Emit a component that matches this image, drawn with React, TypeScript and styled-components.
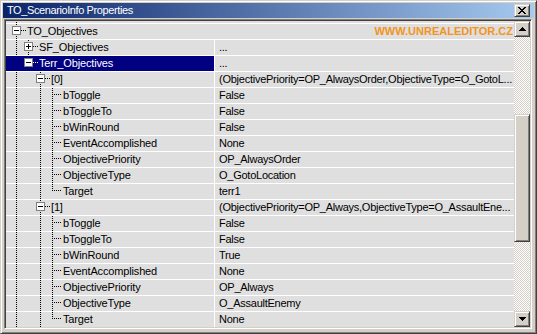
import React from 'react';
import styled, { createGlobalStyle } from 'styled-components';

const GlobalStyle = createGlobalStyle`
  html, body { margin: 0; padding: 0; background: #D4D0C8; }
  body { font-family: "Liberation Sans", Arial, sans-serif; }
`;

const FACE = '#D4D0C8';

const Window = styled.div`
  box-sizing: border-box;
  width: 537px;
  height: 334px;
  background: ${FACE};
  border: 1px solid;
  border-color: ${FACE} #404040 #404040 ${FACE};
  box-shadow: inset 1px 1px #ffffff, inset -1px -1px #808080;
  padding: 2px;
  display: flex;
  flex-direction: column;
`;

const TitleBar = styled.div`
  height: 15px;
  flex: none;
  margin-bottom: 1px;
  display: flex;
  align-items: center;
  justify-content: space-between;
  padding: 0 4px 0 4px;
  background: linear-gradient(to right, #0a246a, #a6caf0);
  color: #ffffff;
  font-size: 11px;
  letter-spacing: -0.4px;
  white-space: nowrap;
`;

const TitleText = styled.span`
  line-height: 15px;
`;

const raised = `
  box-sizing: border-box;
  background: ${FACE};
  border: 1px solid;
  border-color: ${FACE} #404040 #404040 ${FACE};
  box-shadow: inset 1px 1px #ffffff, inset -1px -1px #808080;
`;

const CloseButton = styled.div`
  ${raised}
  width: 16px;
  height: 13px;
  display: flex;
  align-items: center;
  justify-content: center;
`;

const Panel = styled.div`
  box-sizing: border-box;
  margin-left: 1px;
  width: 528px;
  height: 310px;
  flex: none;
  border: 1px solid;
  border-color: #808080 #ffffff #ffffff #808080;
  box-shadow: inset 1px 1px #404040, inset -1px -1px ${FACE};
  padding: 1px;
  display: flex;
`;

const Viewport = styled.div`
  flex: 1;
  overflow: hidden;
  background: #dfdfdf;
`;

const List = styled.div`
  margin-top: -13px;
`;

const Row = styled.div`
  box-sizing: border-box;
  height: 16px;
  display: flex;
  border-bottom: 1px solid #ffffff;
  font-size: 11px;
  line-height: 15px;
  color: #000000;
`;

const NameCell = styled.div<{ $selected?: boolean }>`
  width: 208px;
  flex: none;
  display: flex;
  align-items: flex-start;
  overflow: hidden;
  white-space: nowrap;
  letter-spacing: -0.15px;
  background: ${(p) => (p.$selected ? '#000080' : 'transparent')};
  color: ${(p) => (p.$selected ? '#ffffff' : '#000000')};
`;

const Label = styled.span`
  line-height: 15px;
`;

const ValueCell = styled.div`
  flex: 1;
  min-width: 0;
  border-left: 1px solid #ffffff;
  padding-left: 4px;
  overflow: hidden;
  white-space: nowrap;
  letter-spacing: -0.25px;
`;

const Watermark = styled.span`
  margin-left: auto;
  padding-right: 1px;
  font-weight: bold;
  font-size: 11px;
  color: #f39420;
  white-space: nowrap;
`;

const ScrollBar = styled.div`
  width: 16px;
  flex: none;
  display: flex;
  flex-direction: column;
`;

const ScrollButton = styled.div`
  ${raised}
  height: 16px;
  flex: none;
  display: flex;
  align-items: center;
  justify-content: center;
`;

const Track = styled.div`
  flex: 1;
  display: flex;
  flex-direction: column;
  background-color: #ffffff;
  background-image: repeating-conic-gradient(${FACE} 0% 25%, #ffffff 0% 50%);
  background-size: 2px 2px;
`;

const Thumb = styled.div<{ $top: number; $size: number }>`
  ${raised}
  margin-top: ${(p) => p.$top}px;
  height: ${(p) => p.$size}px;
  flex: none;
`;

type RowData = {
  level: number;
  label: string;
  value?: string;
  expander?: 'plus' | 'minus';
  last?: boolean;
  through: number[];
  selected?: boolean;
  category?: boolean;
};

const cxOf = (l: number) => 10 + 12 * l;
const CY = 6;
const H = 15;

function Guides({ row }: { row: RowData }) {
  const cx = cxOf(row.level);
  const w = cx + 11;
  const parts: React.ReactElement[] = [];
  const dot = (x: number, y: number, c = '#000000') =>
    parts.push(<rect key={parts.length} x={x} y={y} width={1} height={1} fill={c} />);
  if (!row.selected) {
    for (const l of row.through) for (let y = 0; y < H; y += 2) dot(cxOf(l), y);
    // own level: line from top
    const topEnd = row.expander ? CY - 4 : CY;
    for (let y = 0; y < topEnd; y += 2) dot(cx, y);
    if (!row.last) {
      const start = row.expander ? CY + 6 : CY + 2;
      for (let y = start; y < H; y += 2) dot(cx, y);
    }
    if (!row.expander) dot(cx, CY);
    if (row.expander === 'minus') {
      for (let y = 12; y < H; y += 2) dot(cxOf(row.level + 1), y);
    }
  }
  const ink = row.selected ? '#ffffff' : '#000000';
  if (row.expander) {
    for (let x = cx + 5; x <= cx + 9; x += 2) dot(x, CY, ink);
    parts.push(
      <rect key="b1" x={cx - 4} y={CY - 4} width={9} height={9} fill="#808080" />,
      <rect key="b2" x={cx - 3} y={CY - 3} width={7} height={7} fill="#ffffff" />,
      <rect key="b3" x={cx - 2} y={CY} width={5} height={1} fill="#000000" />
    );
    if (row.expander === 'plus')
      parts.push(<rect key="b4" x={cx} y={CY - 2} width={1} height={5} fill="#000000" />);
  } else {
    for (let x = cx + 2; x <= cx + 8; x += 2) dot(x, CY, ink);
  }
  return (
    <svg width={w} height={H} viewBox={`0 0 ${w} ${H}`} shapeRendering="crispEdges" style={{ flex: 'none', display: 'block' }}>
      {parts}
    </svg>
  );
}

const props = (
  vals: [string, string][]
): RowData[] =>
  vals.map(([label, value], i) => ({
    level: 3,
    label,
    value,
    through: [0, 2],
    last: i === vals.length - 1,
  }));

const rows: RowData[] = [
  { level: 0, label: 'TO_Objectives', expander: 'minus', through: [], category: true },
  { level: 1, label: 'SF_Objectives', value: '...', expander: 'plus', through: [0] },
  { level: 1, label: 'Terr_Objectives', value: '...', expander: 'minus', last: true, through: [0], selected: true },
  {
    level: 2,
    label: '[0]',
    value: '(ObjectivePriority=OP_AlwaysOrder,ObjectiveType=O_GotoL...',
    expander: 'minus',
    through: [0],
  },
  ...props([
    ['bToggle', 'False'],
    ['bToggleTo', 'False'],
    ['bWinRound', 'False'],
    ['EventAccomplished', 'None'],
    ['ObjectivePriority', 'OP_AlwaysOrder'],
    ['ObjectiveType', 'O_GotoLocation'],
    ['Target', 'terr1'],
  ]),
  {
    level: 2,
    label: '[1]',
    value: '(ObjectivePriority=OP_Always,ObjectiveType=O_AssaultEne...',
    expander: 'minus',
    through: [0],
  },
  ...props([
    ['bToggle', 'False'],
    ['bToggleTo', 'False'],
    ['bWinRound', 'True'],
    ['EventAccomplished', 'None'],
    ['ObjectivePriority', 'OP_Always'],
    ['ObjectiveType', 'O_AssaultEnemy'],
    ['Target', 'None'],
  ]),
];

function CloseGlyph() {
  const r: React.ReactElement[] = [];
  for (let i = 0; i < 7; i++) {
    r.push(<rect key={`a${i}`} x={i} y={i} width={2} height={1} fill="#000" />);
    r.push(<rect key={`b${i}`} x={6 - i} y={i} width={2} height={1} fill="#000" />);
  }
  return (
    <svg width={8} height={7} viewBox="0 0 8 7" shapeRendering="crispEdges" style={{ display: 'block' }}>
      {r}
    </svg>
  );
}

function Arrow({ dir }: { dir: 'up' | 'down' }) {
  const r: React.ReactElement[] = [];
  for (let i = 0; i < 4; i++) {
    const y = dir === 'up' ? i : 3 - i;
    r.push(<rect key={i} x={3 - i} y={y} width={2 * i + 1} height={1} fill="#000" />);
  }
  return (
    <svg width={7} height={4} viewBox="0 0 7 4" shapeRendering="crispEdges" style={{ display: 'block' }}>
      {r}
    </svg>
  );
}

function PartialRow() {
  const dots: React.ReactElement[] = [];
  for (let y = 0; y < H; y += 2) dots.push(<rect key={y} x={cxOf(0)} y={y} width={1} height={1} fill="#000" />);
  return (
    <Row>
      <NameCell>
        <svg width={20} height={H} shapeRendering="crispEdges" style={{ display: 'block' }}>
          {dots}
        </svg>
      </NameCell>
    </Row>
  );
}

export default function App() {
  return (
    <>
      <GlobalStyle />
      <Window>
        <TitleBar>
          <TitleText>TO_ScenarioInfo Properties</TitleText>
          <CloseButton>
            <CloseGlyph />
          </CloseButton>
        </TitleBar>
        <Panel>
          <Viewport>
            <List>
              <PartialRow />
              {rows.map((row, i) => (
                <Row key={i}>
                  <NameCell $selected={row.selected}>
                    <Guides row={row} />
                    <Label>{row.label}</Label>
                  </NameCell>
                  {row.category ? (
                    <Watermark>WWW.UNREALEDITOR.CZ</Watermark>
                  ) : (
                    <ValueCell>{row.value}</ValueCell>
                  )}
                </Row>
              ))}
            </List>
          </Viewport>
          <ScrollBar>
            <ScrollButton>
              <Arrow dir="up" />
            </ScrollButton>
            <Track>
              <Thumb $top={77} $size={128} />
            </Track>
            <ScrollButton>
              <Arrow dir="down" />
            </ScrollButton>
          </ScrollBar>
        </Panel>
      </Window>
    </>
  );
}
